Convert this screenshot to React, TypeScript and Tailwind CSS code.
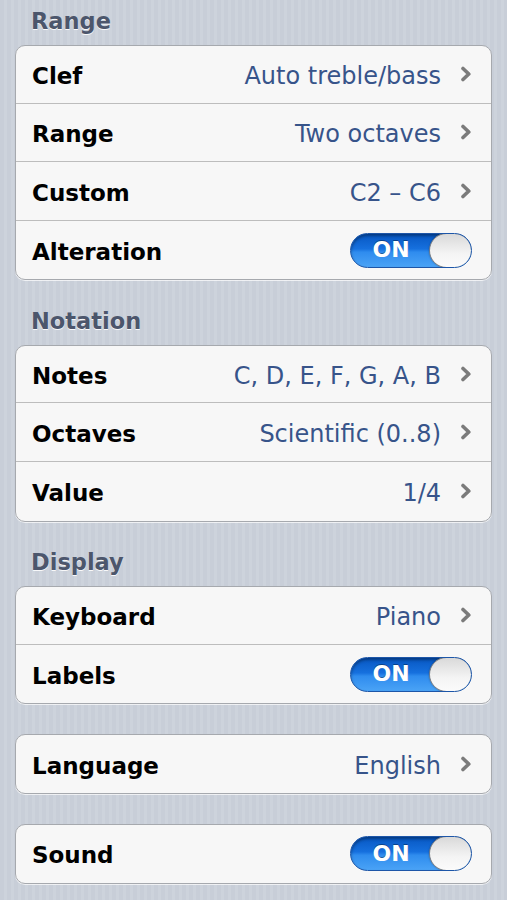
import React from "react";

type Row =
  | { label: string; value: string }
  | { label: string; toggle: true };

type Section = { title?: string; rows: Row[] };

const SECTIONS: Section[] = [
  {
    title: "Range",
    rows: [
      { label: "Clef", value: "Auto treble/bass" },
      { label: "Range", value: "Two octaves" },
      { label: "Custom", value: "C2 – C6" },
      { label: "Alteration", toggle: true },
    ],
  },
  {
    title: "Notation",
    rows: [
      { label: "Notes", value: "C, D, E, F, G, A, B" },
      { label: "Octaves", value: "Scientific (0..8)" },
      { label: "Value", value: "1/4" },
    ],
  },
  {
    title: "Display",
    rows: [
      { label: "Keyboard", value: "Piano" },
      { label: "Labels", toggle: true },
    ],
  },
  { rows: [{ label: "Language", value: "English" }] },
  { rows: [{ label: "Sound", toggle: true }] },
];

function Chevron() {
  return (
    <svg width="12" height="16" viewBox="0 0 12 16" className="ml-[19px] shrink-0">
      <path
        d="M3 2.5 L8.8 8 L3 13.5"
        fill="none"
        stroke="#7b7b7b"
        strokeWidth="3.6"
        strokeLinecap="round"
        strokeLinejoin="round"
      />
    </svg>
  );
}

function Toggle() {
  return (
    <div className="ml-auto flex items-center w-[122px] h-[35px] rounded-full border border-[#1d56a8] bg-[linear-gradient(#0757c2,#1670de_45%,#2f8cee_55%,#4aa3f6)] shadow-[inset_0_2px_3px_rgba(0,0,0,0.35)] overflow-hidden">
      <span className="flex-1 text-center text-white font-bold text-[22px] leading-none pl-[2px] [text-shadow:0_-1px_0_rgba(0,0,0,0.35)]">
        ON
      </span>
      <span className="w-[43px] h-[35px] -mr-px rounded-full border border-[#777b80] bg-[linear-gradient(#d9d9d9,#f4f4f4_60%,#fbfbfb)] shadow-[0_0_2px_rgba(0,0,0,0.3)]" />
    </div>
  );
}

function SettingRow({ row, first }: { row: Row; first: boolean }) {
  return (
    <div className={`flex items-center pl-[16px] pr-[19px] ${first ? "h-[57.6px]" : "h-[58.6px]"}`}>
      <span className="text-[23px] font-bold text-black translate-y-[2px]">{row.label}</span>
      {"toggle" in row ? (
        <Toggle />
      ) : (
        <>
          <span className="ml-auto text-[24px] text-[#37548a] translate-y-[2px]">{row.value}</span>
          <Chevron />
        </>
      )}
    </div>
  );
}

export default function App() {
  return (
    <div className="w-[507px] h-[900px] overflow-hidden px-[15px] font-['DejaVu_Sans',sans-serif] bg-[repeating-linear-gradient(90deg,#c8ced8_0px,#c8ced8_4px,#cdd3dc_4px,#cdd3dc_7px)]">
      {SECTIONS.map((s, i) => (
        <div key={i} className={i === 0 ? "" : s.title ? "mt-[19.5px]" : "mt-[30px]"}>
          {s.title && (
            <div className="h-[45px] pt-[8px] pl-[16px] text-[22.5px] leading-[26px] font-bold text-[#4c566c] [text-shadow:0_1px_0_rgba(255,255,255,0.9)]">
              {s.title}
            </div>
          )}
          <div className="rounded-[10px] border border-[#a6a9ae] bg-[#f7f7f7] overflow-hidden divide-y divide-[#bdbdbd] shadow-[0_1px_0_rgba(255,255,255,0.7)]">
            {s.rows.map((r, j) => (
              <SettingRow key={r.label} row={r} first={j === 0} />
            ))}
          </div>
        </div>
      ))}
    </div>
  );
}
